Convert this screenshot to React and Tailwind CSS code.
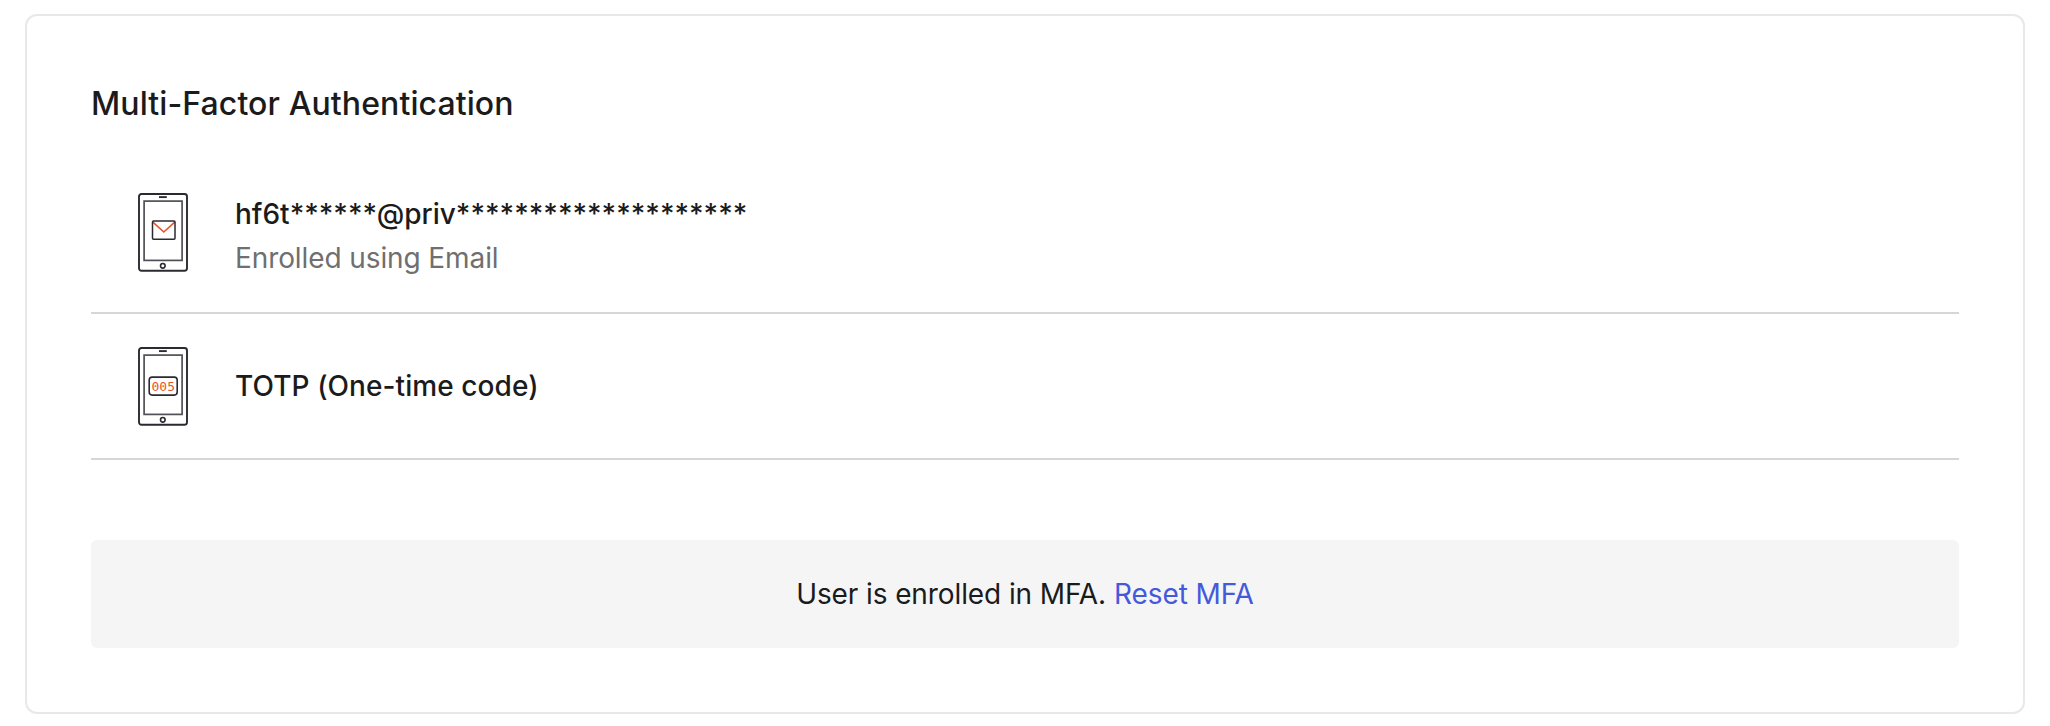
function Phone({ children, className }) {
  return (
    <svg width="50" height="80" viewBox="0 0 50 80" fill="none" stroke="#2a2a31" className={"shrink-0 " + className}>
      <rect x="1" y="1" width="48" height="76.8" rx="2.5" strokeWidth="1.9" />
      <rect x="6.1" y="8.1" width="38" height="59.3" stroke="#505056" strokeWidth="1.7" />
      <path d="M21 4.1h7.8" strokeWidth="1.9" />
      <circle cx="24.8" cy="72.8" r="2.3" strokeWidth="1.6" />
      {children}
    </svg>
  );
}

function Row({ icon, title, detail, className }) {
  return (
    <li className={"flex items-center border-b-2 border-[#d6d6d6] pl-[47px] " + className}>
      {icon}
      <div className="ml-[47px]">
        <p className="text-[28px] leading-[44px] font-medium">{title}</p>
        {detail && <p className="text-[28px] leading-[44px] tracking-[-0.1px] text-[#6f6f6f]">{detail}</p>}
      </div>
    </li>
  );
}

export default function App() {
  return (
    <main className="h-[726px] bg-white px-[25px] pt-3.5 font-['Inter',sans-serif] text-[#1b1b1b]">
      <section className="h-[700px] rounded-xl border-2 border-[#e8e8e8] px-16 pt-16">
        <h2 className="text-[32px] leading-[48px] font-medium tracking-[0.1px]">Multi-Factor Authentication</h2>
        <ul className="mt-8">
          <Row
            className="h-[154px]"
            title="hf6t******@priv********************"
            detail="Enrolled using Email"
            icon={
              <Phone className="mb-1.5">
                <path d="M14.6 28.8l11.2 10.2L37 28.8" stroke="#eb5424" strokeWidth="1.6" />
                <rect x="14.5" y="28.1" width="22.5" height="18.2" rx="1" strokeWidth="1.5" />
              </Phone>
            }
          />
          <Row
            className="h-[146px]"
            title={<span className="tracking-[0.08px]">TOTP (One-time code)</span>}
            icon={
              <Phone className="mt-0.5">
                <rect x="11.2" y="30.1" width="28" height="18" rx="3" strokeWidth="1.6" />
                <text x="25.3" y="43.8" textAnchor="middle" fill="#eb5424" stroke="none" className="font-['DejaVu_Sans_Mono',monospace] text-[13px]">005</text>
              </Phone>
            }
          />
        </ul>
        <div className="mt-20 flex h-[108px] items-center justify-center gap-2 rounded-md bg-[#f5f5f5] text-[28px] tracking-[-0.1px]">
          <span>User is enrolled in MFA.</span>
          <a href="#reset" className="text-[#4459db]">Reset MFA</a>
        </div>
      </section>
    </main>
  );
}
